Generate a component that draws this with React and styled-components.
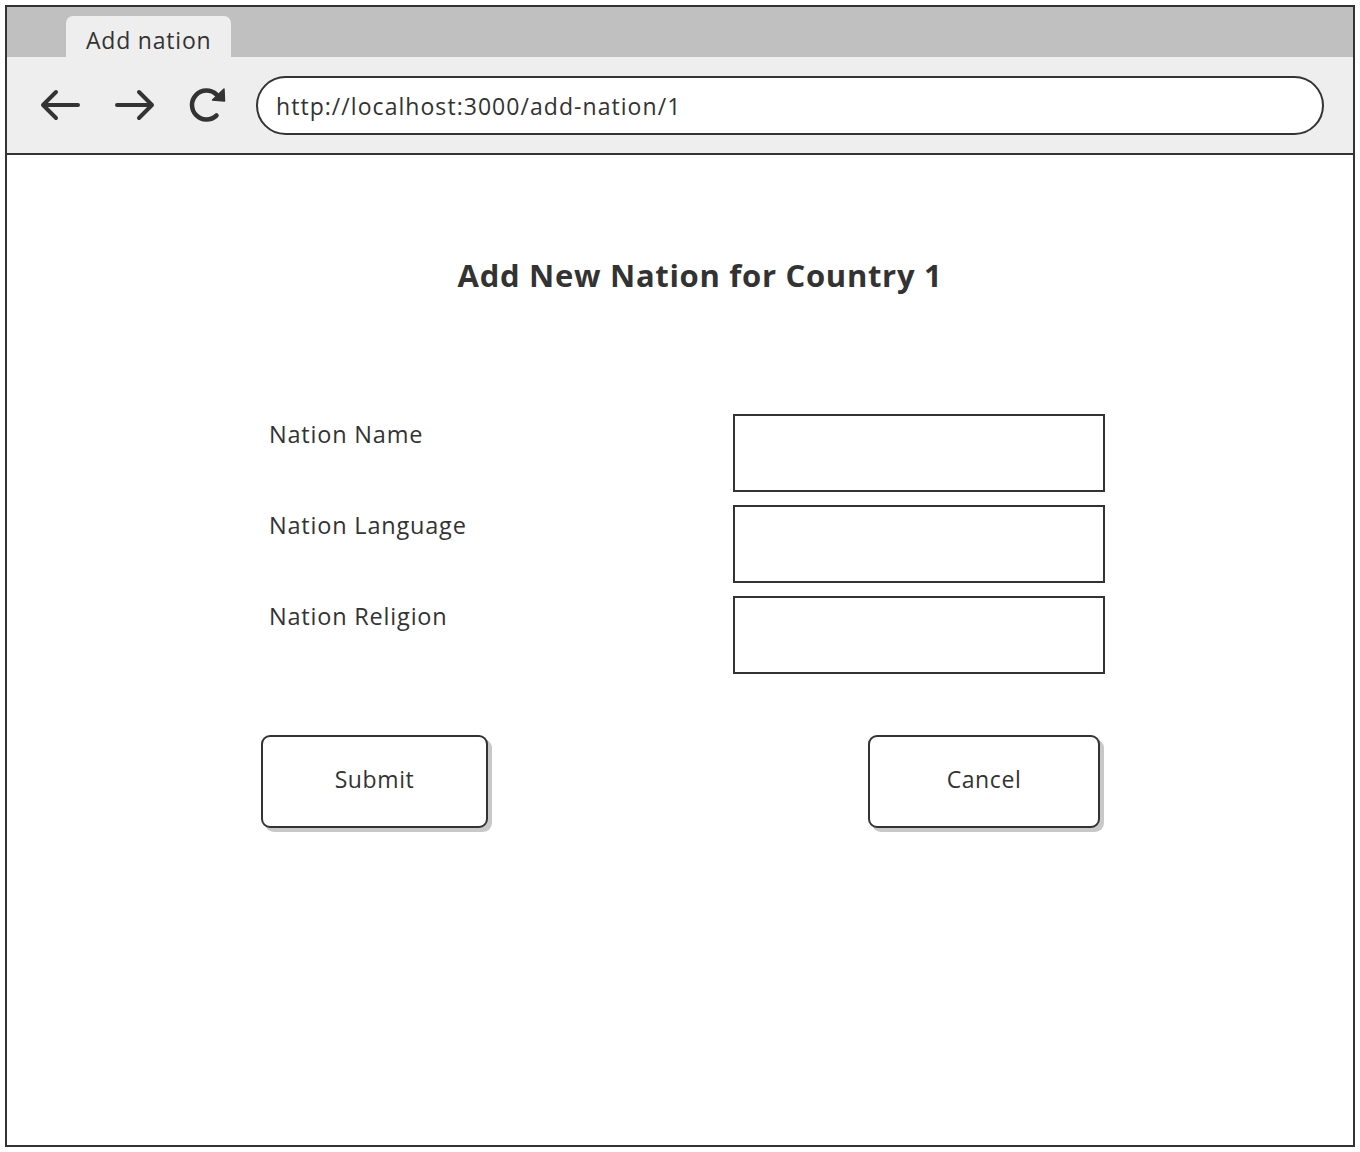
import React from "react";
import styled, { createGlobalStyle } from "styled-components";

const Global = createGlobalStyle`
  html, body { margin: 0; padding: 0; background: #fff; }
  body { font-family: "Open Sans", "Liberation Sans", sans-serif; color: #333; }
  * { box-sizing: border-box; }
`;

const Page = styled.div`
  padding: 5px 0 0 5px;
`;

const Frame = styled.div`
  width: 1350px;
  height: 1142px;
  border: 2px solid #333;
  background: #fff;
  display: flex;
  flex-direction: column;
`;

const TabBar = styled.div`
  height: 50px;
  background: #c0c0c0;
  padding: 9px 0 0 59px;
  display: flex;
  align-items: flex-end;
`;

const Tab = styled.div`
  width: 165px;
  height: 41px;
  background: #eeeeee;
  border-radius: 7px 7px 0 0;
  padding-left: 20px;
  font-size: 23px;
  letter-spacing: 0.8px;
  line-height: 48px;
  color: #333;
  overflow: hidden;
  white-space: nowrap;
`;

const Toolbar = styled.div`
  height: 98px;
  background: #eeeeee;
  border-bottom: 2px solid #333;
  display: flex;
  align-items: center;
  padding-left: 33px;
  padding-right: 29px;
`;

const NavIcon = styled.svg`
  flex: none;
  margin-right: ${(p) => p.$gap}px;
  display: block;
`;

const UrlBar = styled.div`
  flex: 1;
  height: 59px;
  border: 2px solid #333;
  border-radius: 30px;
  background: #fff;
  display: flex;
  align-items: center;
  padding-left: 18px;
  font-size: 23px;
  letter-spacing: 1.05px;
  color: #333;
  margin-top: 1px;
`;

const Content = styled.div`
  flex: 1;
  display: flex;
  flex-direction: column;
`;

const Title = styled.h1`
  margin: 101px 0 0 0;
  padding-left: 40px;
  text-align: center;
  font-size: 31px;
  letter-spacing: 0.7px;
  line-height: 38px;
  font-weight: 700;
  color: #333;
`;

const Form = styled.div`
  margin-top: 120px;
  margin-left: 262px;
  display: grid;
  grid-template-columns: 464px 372px;
  grid-auto-rows: 78px;
  row-gap: 13px;
`;

const Label = styled.label`
  font-size: 23.5px;
  letter-spacing: 0.8px;
  line-height: 30px;
  padding-top: 5px;
  color: #333;
`;

const Input = styled.div`
  border: 2px solid #333;
  background: #fff;
`;

const Buttons = styled.div`
  margin-top: 61px;
  margin-left: 254px;
  display: flex;
`;

const Button = styled.div`
  width: ${(p) => p.$w}px;
  height: 93px;
  margin-left: ${(p) => p.$ml || 0}px;
  border: 2px solid #333;
  border-radius: 9px;
  background: #fff;
  box-shadow: 4px 4px 0 #c8c8c8;
  display: flex;
  align-items: center;
  justify-content: center;
  padding-bottom: 6px;
  font-size: 23px;
  letter-spacing: 0.6px;
  color: #333;
`;

const Back = () => (
  <NavIcon $gap={35} width="40" height="32" viewBox="0 0 40 32">
    <path d="M38 16 H3 M16 3 L3 16 L16 29" fill="none" stroke="#333" strokeWidth="4" strokeLinecap="round" strokeLinejoin="round" />
  </NavIcon>
);

const Forward = () => (
  <NavIcon $gap={33} width="40" height="32" viewBox="0 0 40 32">
    <path d="M2 16 H37 M24 3 L37 16 L24 29" fill="none" stroke="#333" strokeWidth="4" strokeLinecap="round" strokeLinejoin="round" />
  </NavIcon>
);

const Reload = () => (
  <NavIcon $gap={30} width="38" height="36" viewBox="0 0 38 36">
    <path d="M28.5 7.5 A14.5 14.5 0 1 0 28.5 28.5" fill="none" stroke="#333" strokeWidth="4.5" strokeLinecap="round" />
    <path d="M36 2 L36.5 14 L24.5 13 Z" fill="#333" stroke="#333" strokeWidth="1.5" strokeLinejoin="round" />
  </NavIcon>
);

export default function App() {
  return (
    <Page>
      <Global />
      <Frame>
        <TabBar>
          <Tab>Add nation</Tab>
        </TabBar>
        <Toolbar>
          <Back />
          <Forward />
          <Reload />
          <UrlBar>http://localhost:3000/add-nation/1</UrlBar>
        </Toolbar>
        <Content>
          <Title>Add New Nation for Country 1</Title>
          <Form>
            <Label>Nation Name</Label>
            <Input />
            <Label>Nation Language</Label>
            <Input />
            <Label>Nation Religion</Label>
            <Input />
          </Form>
          <Buttons>
            <Button $w={227}>Submit</Button>
            <Button $w={232} $ml={380}>Cancel</Button>
          </Buttons>
        </Content>
      </Frame>
    </Page>
  );
}
